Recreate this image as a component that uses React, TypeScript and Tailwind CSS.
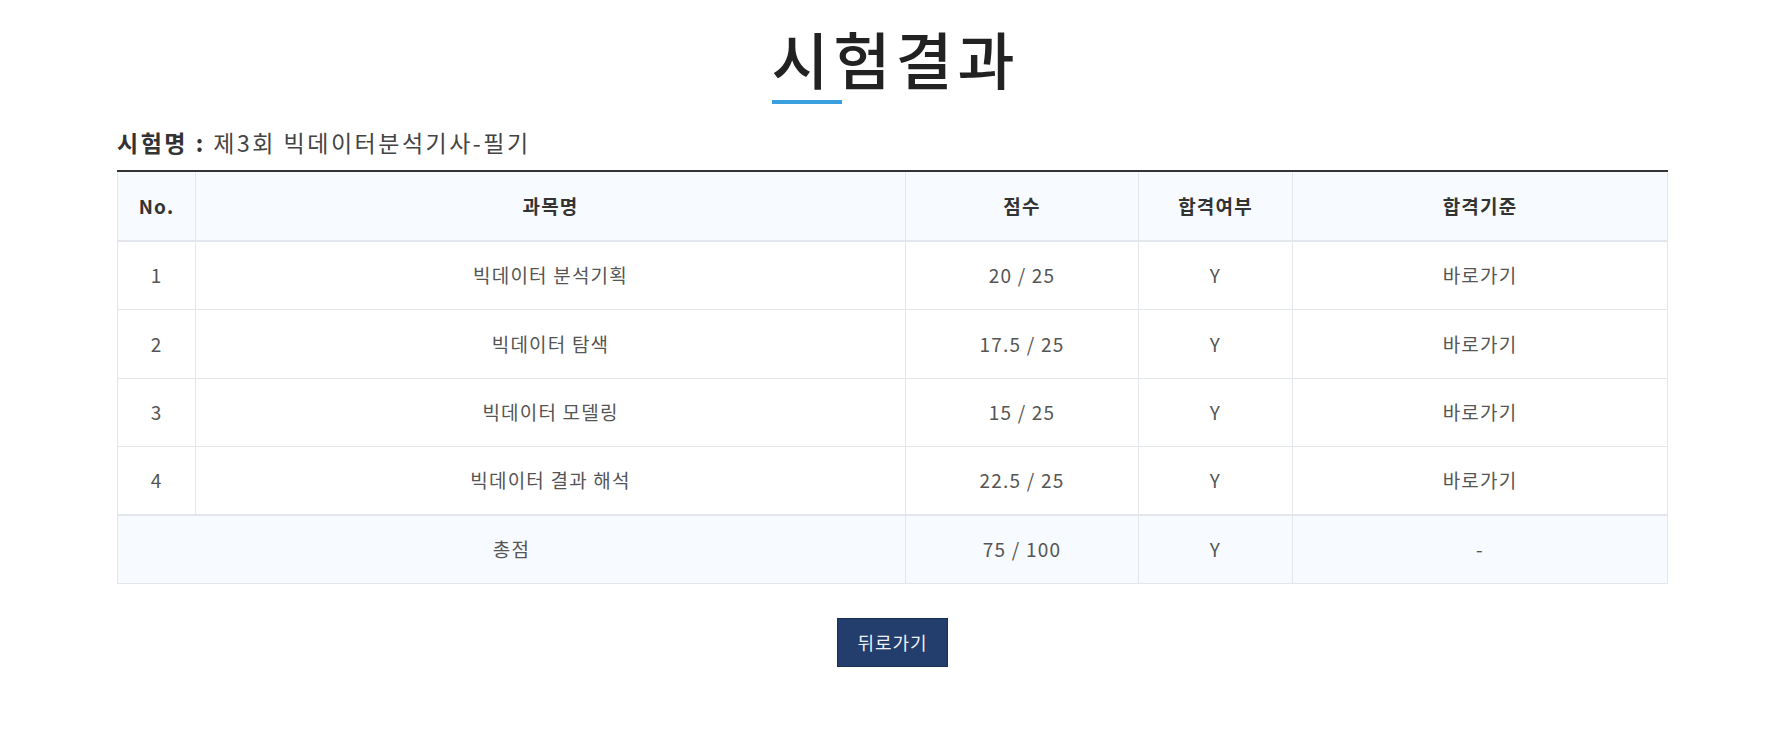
const rows = [
  { no: "1", name: "빅데이터 분석기획", score: "20 / 25", pass: "Y", link: "바로가기" },
  { no: "2", name: "빅데이터 탐색", score: "17.5 / 25", pass: "Y", link: "바로가기" },
  { no: "3", name: "빅데이터 모델링", score: "15 / 25", pass: "Y", link: "바로가기" },
  { no: "4", name: "빅데이터 결과 해석", score: "22.5 / 25", pass: "Y", link: "바로가기" },
];

const font = { fontFamily: '"Noto Sans CJK KR", "Noto Sans", sans-serif' };

export default function App() {
  return (
    <div className="min-h-screen bg-white text-[#333]" style={font}>
      <div className="ml-[117px] w-[1551px] pt-[18px]">
        <h1 className="pl-[6px] text-center text-[62px] leading-[80px] font-medium tracking-[5px] text-[#222]">
          <span className="relative inline-block">
            시
            <span className="absolute left-[1px] bottom-[-6px] h-[4px] w-[70px] bg-[#3a9fdf]" />
          </span>
          험결과
        </h1>

        <p className="mt-[30px] text-[23px] leading-[28px] tracking-[2.5px] text-[#444]">
          <span className="font-bold text-[#333]">시험명 :</span> 제3회 빅데이터분석기사-필기
        </p>

        <table className="mt-[14px] w-full border-collapse border-t-2 border-t-[#333] text-center text-[19px] tracking-[1.2px]">
          <colgroup>
            <col className="w-[78px]" />
            <col className="w-[710px]" />
            <col className="w-[233px]" />
            <col className="w-[154px]" />
            <col />
          </colgroup>
          <thead>
            <tr className="h-[70px] bg-[#f7fafe] text-[#333] border-b-2 border-b-[#e3e7eb]">
              <th className="border-x border-[#e3e7eb] font-bold">No.</th>
              <th className="border-x border-[#e3e7eb] font-bold">과목명</th>
              <th className="border-x border-[#e3e7eb] font-bold">점수</th>
              <th className="border-x border-[#e3e7eb] font-bold">합격여부</th>
              <th className="border-x border-[#e3e7eb] font-bold">합격기준</th>
            </tr>
          </thead>
          <tbody className="text-[#555]">
            {rows.map((r) => (
              <tr key={r.no} className="h-[68.5px]">
                <td className="border border-[#e3e7eb]">{r.no}</td>
                <td className="border border-[#e3e7eb]">{r.name}</td>
                <td className="border border-[#e3e7eb]">{r.score}</td>
                <td className="border border-[#e3e7eb]">{r.pass}</td>
                <td className="border border-[#e3e7eb]">{r.link}</td>
              </tr>
            ))}
            <tr className="h-[68px] bg-[#f7fafe] border-t-2 border-t-[#e3e7eb]">
              <td colSpan={2} className="border border-[#e3e7eb]">총점</td>
              <td className="border border-[#e3e7eb]">75 / 100</td>
              <td className="border border-[#e3e7eb]">Y</td>
              <td className="border border-[#e3e7eb]">-</td>
            </tr>
          </tbody>
        </table>

        <div className="mt-[34px] flex justify-center">
          <button className="h-[49px] w-[111px] bg-[#233d6c] text-[18px] tracking-[1px] text-[#eef1f6] border border-[#1a2f55]">
            뒤로가기
          </button>
        </div>
      </div>
    </div>
  );
}
